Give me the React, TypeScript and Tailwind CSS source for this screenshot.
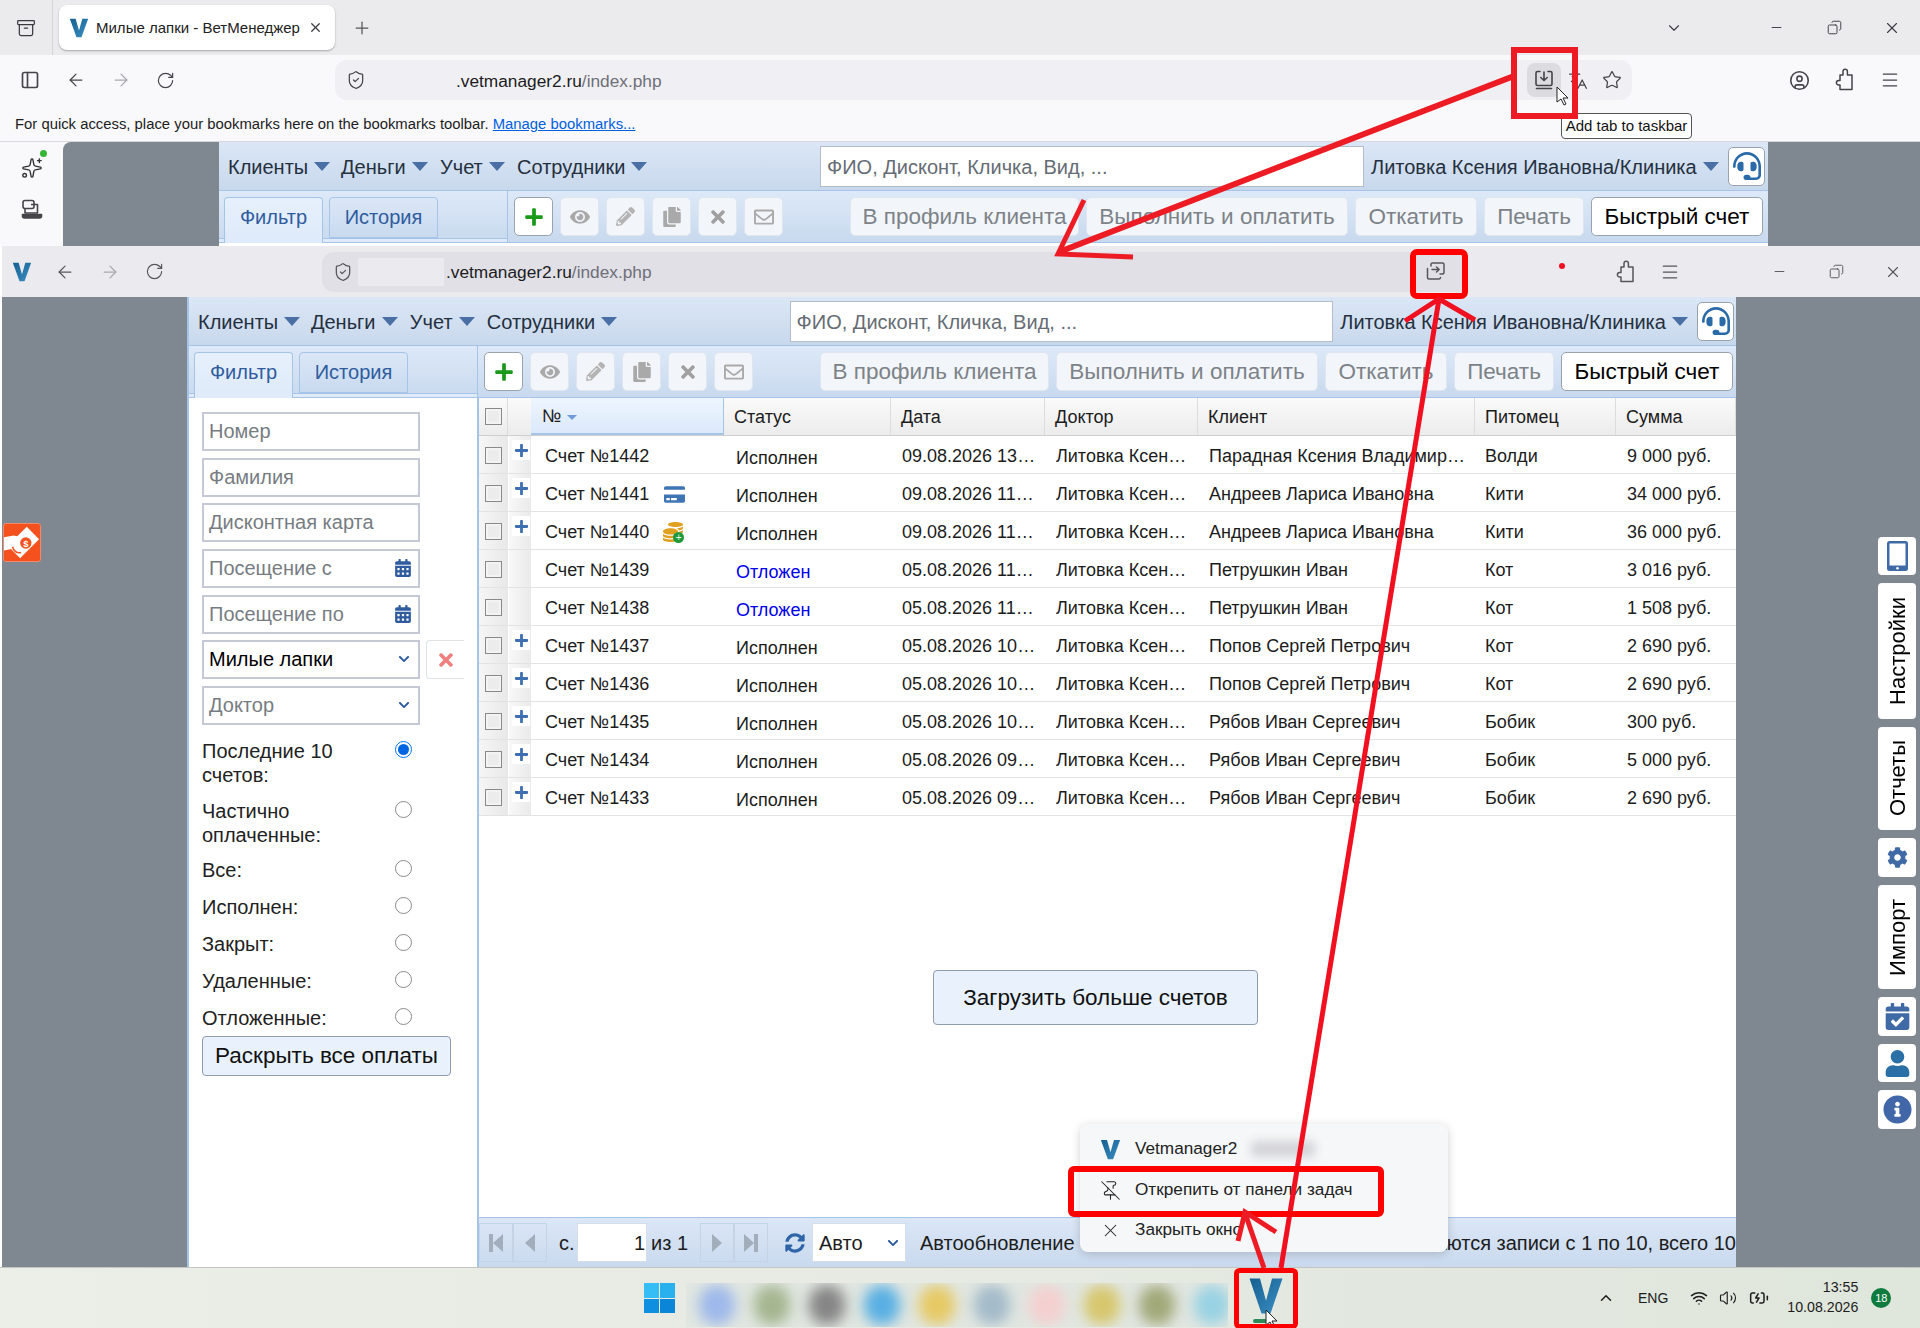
import React from "react";
import { ArrowLeft, ArrowRight, RotateCw, PanelLeft, ShieldCheck, Plus, X, ChevronDown, Minus, Copy, CircleUser, Menu, Languages, Star, Sparkles, PinOff, ChevronUp, Wifi, Volume2, BatteryCharging, Archive } from "lucide-react";
import { FaPlus, FaEye, FaPencilAlt, FaCopy, FaTimes, FaRegEnvelope, FaCalendarAlt, FaCog, FaUser, FaInfoCircle, FaCalendarCheck, FaCreditCard, FaCoins, FaHeadset, FaSyncAlt, FaChevronDown } from "react-icons/fa";

const VLogo = ({ w = 20, h = 20, className = "" }: { w?: number; h?: number; className?: string }) => (
  <svg width={w} height={h} viewBox="0 0 24 24" preserveAspectRatio="none" className={className}>
    <defs>
      <linearGradient id="vg" x1="0" y1="0" x2="1" y2="1">
        <stop offset="0" stopColor="#155f92" />
        <stop offset="1" stopColor="#3c8fc2" />
      </linearGradient>
    </defs>
    <path d="M1 1h7l4 14 4-14h7l-8 22H9Z" fill="url(#vg)" />
  </svg>
);

const ExtIcon = ({ cls }: { cls: string }) => (
  <svg width="20" height="24" viewBox="0 0 20 24" fill="none" stroke="currentColor" strokeWidth="1.500" strokeLinejoin="round" className={cls}>
    <path d="M8 7V3.500a2.200 2.200 0 0 1 4.400 0V7H17v14.500H5V17H3.700a2.300 2.300 0 0 1 0-4.600H5V7Z" />
  </svg>
);

const TaskbarTabIcon = () => (
  <svg width="22" height="22" viewBox="0 0 22 22" fill="none" stroke="currentColor" strokeWidth="1.6" strokeLinecap="round" strokeLinejoin="round">
    <path d="M7 2.500H4.500a1.500 1.500 0 0 0-1.500 1.500V15a1.500 1.500 0 0 0 1.500 1.500h13A1.500 1.500 0 0 0 19 15V4a1.500 1.500 0 0 0-1.500-1.500H15" />
    <path d="M11 3v8M7.800 8.500 11 11.500l3.200-3" />
    <path d="M3.500 19.500h15" />
  </svg>
);

const UntabIcon = () => (
  <svg width="21" height="21" viewBox="0 0 21 21" fill="none" stroke="currentColor" strokeWidth="1.5" strokeLinecap="round" strokeLinejoin="round">
    <path d="M6 5V3.500A1.500 1.500 0 0 1 7.500 2h10A1.500 1.500 0 0 1 19 3.500v8a1.500 1.500 0 0 1-1.500 1.500H15" />
    <path d="M2.500 7.500v9a1.500 1.500 0 0 0 1.500 1.500h10a1.500 1.500 0 0 0 1.500-1.500" />
    <path d="M7 8.500h7M11.500 6l2.700 2.500-2.700 2.500" />
  </svg>
);

const LaptopPhoneIcon = () => (
  <svg width="22" height="22" viewBox="0 0 22 22" fill="none" stroke="#444449" strokeWidth="1.6" strokeLinejoin="round">
    <rect x="2" y="1.500" width="11" height="8" rx="2" />
    <path d="M10 5.500h6.500V14" />
    <path d="M4 10v4h13" />
    <path d="M1.500 15.500h19v1.500a2 2 0 0 1-2 2h-15a2 2 0 0 1-2-2Z" fill="#444449" />
  </svg>
);

const TabletIcon = () => (
  <svg width="21" height="30" viewBox="0 0 21 30">
    <rect x="0" y="0" width="21" height="30" rx="2.500" fill="#3f6aa5" />
    <rect x="2.500" y="2.500" width="16" height="22" fill="#fff" />
    <circle cx="10.500" cy="27.300" r="1.300" fill="#fff" />
  </svg>
);

const Caret = () => <span className="inline-block w-0 h-0 border-x-[8px] border-t-[9px] border-x-transparent border-t-[#4a6fa5]" />;

const MenuItem = ({ label, w }: { label: string; w: string }) => (
  <div className={`flex items-center gap-[6px] text-[20px] text-[#25303e] ${w}`}>
    <span className="pt-[2px]">{label}</span>
    <Caret />
  </div>
);

const IconBtn = ({ children, active = false }: { children: React.ReactNode; active?: boolean }) => (
  <div className={`w-[39px] h-[39px] rounded-[5px] flex items-center justify-center border ${active ? "bg-white border-[#9aa3ad]" : "bg-[#f2f6fb] border-[#dfe6ef]"}`}>{children}</div>
);

const TextBtn = ({ label, w, active = false }: { label: string; w: string; active?: boolean }) => (
  <div className={`h-[39px] rounded-[5px] flex items-center justify-center pt-[1px] border text-[22.5px] whitespace-nowrap ${w} ${active ? "bg-white border-[#9aa3ad] text-black" : "bg-[#f2f6fb] border-[#dfe6ef] text-[#7d8288]"}`}>{label}</div>
);

const AppTop = () => (
  <div className="shrink-0">
    <div className="h-[49px] flex items-center pl-[9px] pr-[2px] bg-gradient-to-b from-[#dbe7f6] to-[#c8d8ec] border-b border-[#a6c4e8]">
      <MenuItem label="Клиенты" w="w-[113px]" />
      <MenuItem label="Деньги" w="w-[99px]" />
      <MenuItem label="Учет" w="w-[77px]" />
      <MenuItem label="Сотрудники" w="w-[303px]" />
      <div className="w-[544px] h-[41px] bg-white border border-[#b4bcc8] flex items-center pl-[6px] pt-[1px] text-[20px] text-[#666c74]">ФИО, Дисконт, Кличка, Вид, ...</div>
      <div className="ml-[7px] w-[357px] flex items-center gap-[6px] text-[20px] text-[#25303e] whitespace-nowrap">
        <span className="pt-[2px]">Литовка Ксения Ивановна/Клиника</span>
        <Caret />
      </div>
      <div className="w-[37px] h-[39px] bg-white rounded-[5px] border border-[#9aa3ad] flex items-center justify-center text-[#2a6aa8]">
        <FaHeadset size={28} />
      </div>
    </div>
    <div className="h-[52px] flex bg-gradient-to-b from-[#dde9f8] to-[#c8d9ee]">
      <div className="w-[289px] shrink-0 relative border-r border-[#a6c4e8]">
        <div className="absolute left-0 right-0 top-[47px] h-[5px] bg-[#dfeafa] border-t border-b border-[#a6c4e8]" />
        <div className="relative flex pl-[5px] pt-[6px] gap-[6px]">
          <div className="w-[99px] h-[46px] bg-gradient-to-b from-[#e6f0fc] to-[#dfeafa] border border-b-0 border-[#a6c4e8] rounded-t-[4px] flex items-center justify-center pb-[8px] text-[20px] text-[#2f5c9e]">Фильтр</div>
          <div className="w-[109px] h-[41px] bg-gradient-to-b from-[#dbe7f7] to-[#c9daef] border border-[#a6c4e8] rounded-t-[4px] flex items-center justify-center pb-[2px] text-[20px] text-[#2f5c9e]">История</div>
        </div>
      </div>
      <div className="flex-1 flex items-center pl-[6px] border-b border-[#a6c4e8]">
        <div className="flex gap-[7px] mr-[67px]">
          <IconBtn active><FaPlus size={20} color="#1a9a1a" /></IconBtn>
          <IconBtn><FaEye size={20} color="#a9a9a9" /></IconBtn>
          <IconBtn><FaPencilAlt size={19} color="#b4b4b4" /></IconBtn>
          <IconBtn><FaCopy size={20} color="#a9a9a9" /></IconBtn>
          <IconBtn><FaTimes size={20} color="#a0a0a0" /></IconBtn>
          <IconBtn><FaRegEnvelope size={20} color="#a9a9a9" /></IconBtn>
        </div>
        <div className="flex gap-[7px]">
          <TextBtn label="В профиль клиента" w="w-[229px]" />
          <TextBtn label="Выполнить и оплатить" w="w-[262px]" />
          <TextBtn label="Откатить" w="w-[122px]" />
          <TextBtn label="Печать" w="w-[100px]" />
          <TextBtn label="Быстрый счет" w="w-[172px]" active />
        </div>
      </div>
    </div>
  </div>
);

const Field = ({ label, icon = null, dark = false, chev = false, w = "w-[218px]" }: { label: string; icon?: React.ReactNode; dark?: boolean; chev?: boolean; w?: string }) => (
  <div className={`${w} h-[39px] border-2 border-[#c5c9d6] flex items-center justify-between pl-[5px] pr-[6px] pb-[1px] text-[20px] ${dark ? "text-black" : "text-[#777c82]"}`}>
    <span>{label}</span>
    {icon}
    {chev && <FaChevronDown size={12} color="#2f5c9e" className="mr-[2px]" />}
  </div>
);

const Radio = ({ on = false }: { on?: boolean }) => (
  <span className={`w-[17px] h-[17px] rounded-full border flex items-center justify-center shrink-0 ${on ? "border-[#0075ff]" : "border-[#8a8a8a]"}`}>
    {on && <span className="w-[11px] h-[11px] rounded-full bg-[#0065e0]" />}
  </span>
);

const radios = [
  { l: ["Последние 10", "счетов:"], mt: "mt-[14px]", on: true },
  { l: ["Частично", "оплаченные:"], mt: "mt-[12px]" },
  { l: ["Все:"], mt: "mt-[11px]" },
  { l: ["Исполнен:"], mt: "mt-[13px]" },
  { l: ["Закрыт:"], mt: "mt-[13px]" },
  { l: ["Удаленные:"], mt: "mt-[13px]" },
  { l: ["Отложенные:"], mt: "mt-[13px]" },
];

const FilterPanel = () => (
  <div className="w-[290px] shrink-0 bg-white border-r-2 border-[#a6c4e8] pl-[13px] pt-[14px] flex flex-col">
    <div className="flex flex-col gap-[6.67px]">
      <Field label="Номер" />
      <Field label="Фамилия" />
      <Field label="Дисконтная карта" />
      <Field label="Посещение с" icon={<FaCalendarAlt size={18} color="#2f5c9e" />} />
      <Field label="Посещение по" icon={<FaCalendarAlt size={18} color="#2f5c9e" />} />
      <div className="flex gap-[6px]">
        <Field label="Милые лапки" dark chev />
        <div className="w-[38px] h-[39px] border border-r-0 border-[#dfe3e8] rounded-l-[4px] flex items-center justify-center">
          <FaTimes size={20} color="#f07f7f" />
        </div>
      </div>
      <Field label="Доктор" chev />
    </div>
    {radios.map((r) => (
      <div key={r.l[0]} className={`${r.mt} w-[211px] flex justify-between text-[20px] leading-[24px] text-[#222]`}>
        <div>{r.l.map((t) => <div key={t}>{t}</div>)}</div>
        <div className="h-[24px] flex items-center mr-[1px] -mt-[1px]"><Radio on={r.on} /></div>
      </div>
    ))}
    <div className="mt-[6px] w-[249px] h-[40px] bg-[#e8f1fc] border border-[#8f9bb0] rounded-[4px] flex items-center justify-center text-[22.5px] text-[#111] whitespace-nowrap">Раскрыть все оплаты</div>
  </div>
);

const cols = "grid grid-cols-[29px_23px_193px_167px_154px_153px_277px_141px_1fr]";

const head = ["Статус", "Дата", "Доктор", "Клиент", "Питомец", "Сумма"];

const Check = () => (
  <span className="w-[17px] h-[17px] border border-[#8a8a8a] bg-[#f3f3f3] flex items-center justify-center">
    <span className="w-[11px] h-[11px] bg-[#ececec]" />
  </span>
);

const rows = [
  { n: "1442", st: "Исполнен", d: "09.08.2026 13:42", c: "Парадная Ксения Владимировна", p: "Волди", s: "9 000 руб.", plus: true },
  { n: "1441", st: "Исполнен", d: "09.08.2026 11:30", c: "Андреев Лариса Ивановна", p: "Кити", s: "34 000 руб.", plus: true, ic: "card" },
  { n: "1440", st: "Исполнен", d: "09.08.2026 11:15", c: "Андреев Лариса Ивановна", p: "Кити", s: "36 000 руб.", plus: true, ic: "coin" },
  { n: "1439", st: "Отложен", d: "05.08.2026 11:40", c: "Петрушкин Иван", p: "Кот", s: "3 016 руб." },
  { n: "1438", st: "Отложен", d: "05.08.2026 11:20", c: "Петрушкин Иван", p: "Кот", s: "1 508 руб." },
  { n: "1437", st: "Исполнен", d: "05.08.2026 10:50", c: "Попов Сергей Петрович", p: "Кот", s: "2 690 руб.", plus: true },
  { n: "1436", st: "Исполнен", d: "05.08.2026 10:30", c: "Попов Сергей Петрович", p: "Кот", s: "2 690 руб.", plus: true },
  { n: "1435", st: "Исполнен", d: "05.08.2026 10:10", c: "Рябов Иван Сергеевич", p: "Бобик", s: "300 руб.", plus: true },
  { n: "1434", st: "Исполнен", d: "05.08.2026 09:50", c: "Рябов Иван Сергеевич", p: "Бобик", s: "5 000 руб.", plus: true },
  { n: "1433", st: "Исполнен", d: "05.08.2026 09:30", c: "Рябов Иван Сергеевич", p: "Бобик", s: "2 690 руб.", plus: true },
];

const Table = () => (
  <div className="text-[18px] text-[#1c1c1c]">
    <div className={`${cols} h-[38px] bg-gradient-to-b from-[#fafafa] to-[#ececec] border-b border-[#cfcfcf]`}>
      <div className="flex items-center justify-center border-r border-[#dcdcdc]"><Check /></div>
      <div />
      <div className="flex items-center gap-[6px] pl-[11px] pt-[1px] bg-gradient-to-b from-[#eef5fe] to-[#dbe9fa] border-b-2 border-r border-[#a6c4e8]">
        <span>№</span>
        <span className="w-0 h-0 mt-[3px] border-x-[5px] border-t-[5px] border-x-transparent border-t-[#6f9bd8]" />
      </div>
      {head.map((h) => (
        <div key={h} className="flex items-center pl-[10px] pt-[1px] border-r border-[#dcdcdc]">{h}</div>
      ))}
    </div>
    {rows.map((r) => (
      <div key={r.n} className={`${cols} h-[38px] border-b border-[#e3e3e3]`}>
        <div className="flex items-center justify-center pt-[2px] bg-gradient-to-r from-[#f6f6f6] to-[#e8e8e8]"><Check /></div>
        <div className="bg-gradient-to-r from-[#f8f8f8] to-[#eaeaea] ml-[1px] relative">
          {r.plus && <div className="absolute left-[3px] top-[4px] w-[18px] h-[20px] bg-white flex items-center justify-center"><FaPlus size={15} color="#3f6fb0" /></div>}
        </div>
        <div className="flex items-center pl-[14px] pt-[3px]">
          <span>Счет №{r.n}</span>
          {r.ic === "card" && <FaCreditCard size={21} color="#3f74b5" className="ml-[15px]" />}
          {r.ic === "coin" && (
            <span className="relative ml-[14px] w-[20px] h-[20px]">
              <FaCoins size={20} color="#e0a020" />
              <span className="absolute -right-[1px] -bottom-[1px] w-[11px] h-[11px] rounded-full bg-[#1e9a3a] text-white text-[10px] leading-[10px] flex items-center justify-center">+</span>
            </span>
          )}
        </div>
        <div className={`flex items-center pl-[12px] pt-[7px] ${r.st === "Отложен" ? "text-[#0000ee]" : ""}`}>{r.st}</div>
        <div className="flex items-center pl-[11px] pr-[9px] pt-[3px] min-w-0"><span className="truncate">{r.d}</span></div>
        <div className="flex items-center pl-[11px] pr-[9px] pt-[3px] min-w-0"><span className="truncate">Литовка Ксения Ивановна</span></div>
        <div className="flex items-center pl-[11px] pr-[9px] pt-[3px] min-w-0"><span className="truncate">{r.c}</span></div>
        <div className="flex items-center pl-[10px] pt-[3px]">{r.p}</div>
        <div className="flex items-center pl-[11px] pt-[3px] whitespace-nowrap">{r.s}</div>
      </div>
    ))}
  </div>
);

const Tri = ({ d }: { d: string }) => (
  <svg width="20" height="24" viewBox="0 0 20 24"><path d={d} fill="#a3aebd" /></svg>
);

const PagerBtn = ({ d }: { d: string }) => (
  <div className="w-[34px] h-[39px] border border-[#c5d3e6] flex items-center justify-center"><Tri d={d} /></div>
);

const Footer = () => (
  <div className="h-[50px] shrink-0 flex items-center bg-gradient-to-b from-[#dbe7f6] to-[#c9d9ee] border-t border-[#a6c4e8] text-[20px] text-[#1c1c1c] whitespace-nowrap">
    <div className="flex">
      <PagerBtn d="M3 3h4v18H3zM17 3v18L7 12Z" />
      <PagerBtn d="M15 3v18L5 12Z" />
    </div>
    <span className="ml-[12px] w-[18px]">с.</span>
    <div className="w-[70px] h-[39px] bg-white border border-[#d5dde8] flex items-center justify-end pr-[1px]">1</div>
    <span className="ml-[4px] w-[49px]">из 1</span>
    <div className="flex">
      <PagerBtn d="M5 3v18l10-9Z" />
      <PagerBtn d="M3 3v18l10-9ZM13 3h4v18h-4z" />
    </div>
    <FaSyncAlt size={20} color="#2f64a8" className="ml-[17px]" />
    <div className="ml-[7px] w-[94px] h-[39px] bg-white border border-[#d5dde8] flex items-center justify-between pl-[6px] pr-[6px]">
      <span>Авто</span>
      <FaChevronDown size={12} color="#2f5c9e" />
    </div>
    <span className="ml-[14px]">Автообновление</span>
    <span className="ml-auto">Показываются записи с 1 по 10, всего 10</span>
  </div>
);

const SideBtn = ({ h, children }: { h: string; children: React.ReactNode }) => (
  <div className={`w-[38px] ${h} bg-white rounded-[4px] flex items-center justify-center`}>{children}</div>
);
const SideText = ({ t }: { t: string }) => (
  <span className="[writing-mode:vertical-rl] rotate-180 text-[22px] text-black pr-[1px]">{t}</span>
);

const OrangeIcon = () => (
  <div className="w-[38px] h-[39px] bg-[#f4511e] rounded-[3px] border border-[#f08a6a] flex items-center justify-center overflow-hidden">
    <svg width="38" height="39" viewBox="0 0 38 39">
      <path d="M24 3 37 16 17 36 4 23Z" fill="#fff" />
      <circle cx="23" cy="20" r="6" fill="#f4511e" />
      <text x="23" y="24" fontSize="10" fontWeight="700" textAnchor="middle" fill="#fff">$</text>
      <path d="M0 14l10-2 9 2-5 5-2 3-3 4-9 2Z" fill="#fff" />
      <path d="M9 24c1 5 5 7 9 6" fill="none" stroke="#f4511e" strokeWidth="1.600" />
    </svg>
  </div>
);

const AppBody = () => (
  <div className="flex-1 flex min-h-0">
    <FilterPanel />
    <div className="flex-1 bg-white flex flex-col min-w-0">
      <Table />
      <div className="flex-1 pt-[154px] pl-[454px]">
        <div className="w-[325px] h-[55px] bg-[#e8f1fc] border border-[#8f9bb0] rounded-[4px] flex items-center justify-center text-[22.5px] text-[#111]">Загрузить больше счетов</div>
      </div>
      <Footer />
    </div>
  </div>
);

const Blur = ({ c }: { c: string }) => (
  <div className={`w-[36px] h-[40px] rounded-full blur-[7px] shrink-0 ${c}`} />
);

const CursorIcon = ({ cls }: { cls: string }) => (
  <svg width="14" height="20" viewBox="0 0 14 20" className={cls}>
    <path d="M1 1v15l4-3 3 6 2-1-3-6h5Z" fill="#fff" stroke="#222" strokeWidth="1" />
  </svg>
);

const Overlay = () => (
  <svg width="1920" height="1328" viewBox="0 0 1920 1328" className="absolute inset-0 pointer-events-none" fill="none">
    <rect x="1514" y="50" width="61" height="66" stroke="#ed1c24" strokeWidth="6" />
    <path d="M1514 76 1059 252" stroke="#ed1c24" strokeWidth="6" />
    <path d="M1084 200 1058 254 1133 257" stroke="#ed1c24" strokeWidth="5" />
    <rect x="1413" y="252" width="52" height="44" rx="4" stroke="#f00" strokeWidth="6" />
    <path d="M1281 1268 1439 299" stroke="#f01020" strokeWidth="5" />
    <path d="M1405 321 1439 299 1475 320" stroke="#f01020" strokeWidth="5" />
    <rect x="1071" y="1169" width="310" height="45" rx="3" stroke="#f00" strokeWidth="6" />
    <path d="M1264 1268 1245 1213" stroke="#ed1c24" strokeWidth="5" />
    <path d="M1276 1232 1245 1212 1238 1241" stroke="#ed1c24" strokeWidth="5" />
    <rect x="1236.5" y="1270.5" width="59" height="56" rx="3" stroke="#f00" strokeWidth="5" />
    <circle cx="1562" cy="266" r="3" fill="#f01020" />
  </svg>
);

export default function App() {
  return (
    <div className="relative w-[1920px] h-[1328px] overflow-hidden flex flex-col bg-white [font-family:'Liberation_Sans',Arial,sans-serif]">
      {/* outer browser chrome */}
      <div className="h-[55px] shrink-0 bg-[#ebebed] flex items-center text-[#3a3a40]">
        <div className="w-[53px] h-full border-r border-[#d5d5d8] flex items-center justify-center"><Archive size={20} strokeWidth={1.5} /></div>
        <div className="ml-[6px] w-[276px] h-[45px] bg-white rounded-[8px] shadow-[0_1px_2px_rgba(0,0,0,0.3)] flex items-center pl-[10px] pr-[12px]">
          <VLogo w={20} h={20} />
          <span className="ml-[7px] pt-[1px] text-[15px] text-[#222] whitespace-nowrap overflow-hidden w-[205px]">Милые лапки - ВетМенеджер</span>
          <X size={15} className="ml-auto" strokeWidth={2} />
        </div>
        <Plus size={20} className="ml-[17px] text-[#555]" strokeWidth={1.5} />
        <ChevronDown size={18} className="ml-[1293px]" strokeWidth={1.5} />
        <Minus size={15} className="ml-[86px]" strokeWidth={1.5} />
        <Copy size={15} className="ml-[43px] -scale-x-100" strokeWidth={1.5} />
        <X size={18} className="ml-[41px]" strokeWidth={1.5} />
      </div>
      <div className="h-[45px] shrink-0 bg-[#f9f9fb] flex items-center pt-[5px] text-[#444449]">
        <PanelLeft size={20} strokeWidth={2} className="ml-[20px]" />
        <ArrowLeft size={20} strokeWidth={1.5} className="ml-[26px]" />
        <ArrowRight size={20} strokeWidth={1.5} className="ml-[25px] text-[#a8a8ad]" />
        <RotateCw size={19} strokeWidth={1.5} className="ml-[25px]" />
        <div className="ml-[160px] w-[1297px] h-[40px] bg-[#f0f0f4] rounded-[12px] flex items-center pl-[11px] relative">
          <ShieldCheck size={20} strokeWidth={1.5} />
          <span className="ml-[90px] pt-[3px] text-[17.300px] text-[#1c1c22]">.vetmanager2.ru<span className="text-[#6f6f78]">/index.php</span></span>
          <div className="ml-auto mr-[71px] w-[34px] h-[34px] bg-[#dcdce0] rounded-[8px] flex items-center justify-center"><TaskbarTabIcon /></div>
          <Languages size={20} strokeWidth={1.5} className="absolute right-[44px]" />
          <Star size={20} strokeWidth={1.5} className="absolute right-[10px]" />
        </div>
        <CircleUser size={21} strokeWidth={1.8} className="ml-[157px]" />
        <ExtIcon cls="ml-[25px]" />
        <Menu size={20} strokeWidth={1.5} className="ml-[25px]" />
      </div>
      <div className="h-[42px] shrink-0 bg-[#f9f9fb] border-b border-[#d8d8dc] flex items-center pl-[15px] pt-[7px] text-[14.850px] text-[#1c1c22]">
        For quick access, place your bookmarks here on the bookmarks toolbar.&nbsp;<span className="text-[#0060df] underline">Manage bookmarks...</span>
      </div>
      <CursorIcon cls="absolute left-[1556px] top-[86px]" />
      <div className="absolute left-[1561px] top-[113px] w-[131px] h-[26px] bg-white border border-[#555] rounded-[4px] flex items-center justify-center text-[15px] text-[#111] whitespace-nowrap">Add tab to taskbar</div>

      {/* outer page, behind the second window */}
      <div className="h-[104px] shrink-0 flex bg-[#f9f9fb] overflow-hidden">
        <div className="w-[63px] shrink-0 flex flex-col items-center pt-[15px] gap-[20px] text-[#333]">
          <span className="relative">
            <Sparkles size={22} strokeWidth={1.5} />
            <span className="absolute -right-[4px] -top-[7px] w-[7px] h-[7px] rounded-full bg-[#35b535]" />
          </span>
          <LaptopPhoneIcon />
        </div>
        <div className="flex-1 flex bg-[#7f8791] rounded-tl-[8px]">
          <div className="w-[156px] shrink-0" />
          <div className="w-[1549px] shrink-0 bg-white"><AppTop /></div>
        </div>
      </div>

      {/* second window */}
      <div className="flex-1 ml-[2px] flex flex-col min-h-0">
        <div className="h-[51px] shrink-0 bg-[#ebebef] flex items-center text-[#55555b]">
          <VLogo w={20} h={20} className="ml-[10px]" />
          <ArrowLeft size={20} strokeWidth={1.5} className="ml-[23px]" />
          <ArrowRight size={20} strokeWidth={1.5} className="ml-[25px] text-[#a8a8ad]" />
          <RotateCw size={19} strokeWidth={1.5} className="ml-[25px]" />
          <div className="ml-[158px] w-[1142px] h-[40px] bg-[#e0e0e6] rounded-l-[12px] flex items-center pl-[11px] relative">
            <ShieldCheck size={20} strokeWidth={1.5} />
            <div className="ml-[5px] w-[86px] h-[28px] bg-[#ebebef]" />
            <span className="ml-[2px] pt-[2px] text-[17.300px] text-[#1c1c22]">.vetmanager2.ru<span className="text-[#6f6f78]">/index.php</span></span>
            <span className="absolute right-[18px]"><UntabIcon /></span>
          </div>
          <ExtIcon cls="ml-[152px]" />
          <Menu size={20} strokeWidth={1.5} className="ml-[24px]" />
          <Minus size={15} strokeWidth={1.5} className="ml-[92px]" />
          <Copy size={15} strokeWidth={1.5} className="ml-[42px] -scale-x-100" />
          <X size={18} strokeWidth={1.5} className="ml-[40px]" />
        </div>
        <div className="flex-1 flex bg-[#7f8791] min-h-0">
          <div className="w-[186px] shrink-0 pt-[226px] pl-[1px]"><OrangeIcon /></div>
          <div className="w-[1549px] shrink-0 flex flex-col border-l-2 border-[#a6c4e8] -ml-[1px]">
            <AppTop />
            <AppBody />
          </div>
          <div className="flex-1 pl-[142px] pt-[240px] flex flex-col gap-[8px]">
            <SideBtn h="h-[38px]"><TabletIcon /></SideBtn>
            <SideBtn h="h-[136px]"><SideText t="Настройки" /></SideBtn>
            <SideBtn h="h-[103px]"><SideText t="Отчеты" /></SideBtn>
            <SideBtn h="h-[39px]"><FaCog size={21} color="#3f6aa5" /></SideBtn>
            <SideBtn h="h-[104px]"><SideText t="Импорт" /></SideBtn>
            <SideBtn h="h-[39px]"><FaCalendarCheck size={27} color="#3f6aa5" /></SideBtn>
            <SideBtn h="h-[38px]"><FaUser size={27} color="#2a6fa5" /></SideBtn>
            <SideBtn h="h-[39px]"><FaInfoCircle size={29} color="#4267a8" /></SideBtn>
          </div>
        </div>
      </div>

      {/* taskbar */}
      <div className="h-[61px] shrink-0 bg-gradient-to-r from-[#eceee8] to-[#dfe6dc] border-t border-[#c4c6c2] flex items-center text-[#1c1c1c]">
        <div className="ml-[644px] w-[31px] h-[30px] grid grid-cols-2 gap-[1px] shrink-0">
          <span className="bg-[#35bdf5]" /><span className="bg-[#2bb0ee]" /><span className="bg-[#0f8fdf]" /><span className="bg-[#0b85d8]" />
        </div>
        <div className="ml-[11px] w-[542px] h-[44px] self-end mb-[1px] bg-[#e1e7e1] overflow-hidden flex items-center pl-[13px] gap-[19px] shrink-0">
          <Blur c="bg-[#9db8ea]" />
          <Blur c="bg-[#a4b58f]" />
          <Blur c="bg-[#858585]" />
          <Blur c="bg-[#58afe3]" />
          <Blur c="bg-[#e6c964]" />
          <Blur c="bg-[#a3bac9]" />
          <Blur c="bg-[#f4cfcf]" />
          <Blur c="bg-[#d6c66c]" />
          <Blur c="bg-[#a1a878]" />
          <Blur c="bg-[#98d2e3]" />
        </div>
        <div className="ml-[20px] w-[36px] h-[46px] relative flex items-start justify-center shrink-0 pt-[2px]">
          <VLogo w={36} h={38} />
          <span className="absolute left-[5px] bottom-[-2px] w-[14px] h-[4px] rounded-full bg-[#2e8b57]" />
          <CursorIcon cls="absolute left-[17px] bottom-[-8px]" />
        </div>
        <ChevronUp size={18} strokeWidth={2} className="ml-[313px]" />
        <span className="ml-[23px] text-[14px]">ENG</span>
        <Wifi size={18} strokeWidth={2} className="ml-[22px]" />
        <Volume2 size={18} strokeWidth={1.5} className="ml-[11px]" />
        <BatteryCharging size={20} strokeWidth={1.8} className="ml-[12px]" />
        <div className="ml-[15px] w-[74px] -mt-[2px] flex flex-col items-end text-[14.200px] leading-[20px]">
          <span>13:55</span>
          <span>10.08.2026</span>
        </div>
        <span className="ml-[13px] w-[20px] h-[20px] rounded-full bg-[#0f7b3f] text-white text-[11px] flex items-center justify-center shrink-0">18</span>
      </div>

      {/* taskbar jump list */}
      <div className="absolute left-[1080px] top-[1124px] w-[368px] h-[128px] rounded-[8px] bg-[#f5f7f8] shadow-[0_2px_10px_rgba(0,0,0,0.18)] flex flex-col text-[17.200px] text-[#222] pl-[20px]">
        <div className="h-[42px] mt-[4px] flex items-center gap-[14px]">
          <VLogo w={21} h={21} />
          <span>Vetmanager2</span>
          <span className="w-[64px] h-[16px] bg-[#d4d4d8] blur-[5px] rounded" />
        </div>
        <div className="h-[40px] flex items-center gap-[14px]">
          <PinOff size={21} strokeWidth={1.2} />
          <span>Открепить от панели задач</span>
        </div>
        <div className="h-[40px] flex items-center gap-[14px]">
          <X size={21} strokeWidth={1.2} />
          <span>Закрыть окно</span>
        </div>
      </div>
      <Overlay />
    </div>
  );
}
